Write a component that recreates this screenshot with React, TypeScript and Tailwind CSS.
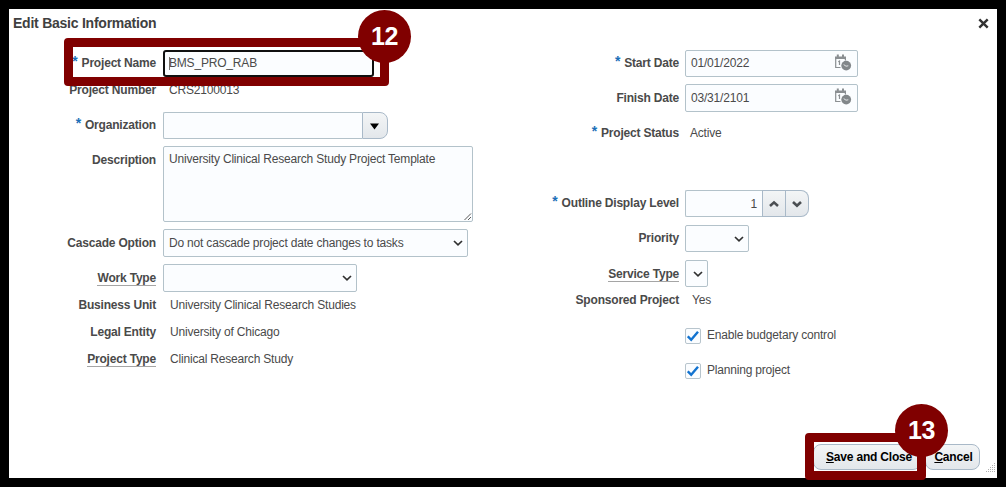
import React from 'react';

interface RowProps {
  label?: string;
  required?: boolean;
  linked?: boolean;
  labelWidth: string;
  className: string;
  children: React.ReactNode;
}

const Row: React.FC<RowProps> = ({ label, required, linked, labelWidth, className, children }) => (
  <div className={`flex items-center ${className}`}>
    <div className={`flex justify-end shrink-0 font-bold text-[#4a4a4a] ${labelWidth}`}>
      {required && <span className="-mt-[4px] mr-1 h-3 text-[14px] leading-[16px] text-[#1c6fb8] font-bold">*</span>}
      {label && <span className={linked ? 'border-b border-[#a5a5a5] leading-[14px] mt-px' : '-mt-px'}>{label}</span>}
    </div>
    {children}
  </div>
);

const LEFT = 'w-[147px] mr-[7px]';
const RIGHT = 'w-[129px] mr-[6px]';
const FIELD = 'flex items-center border border-[#b3c2ca] rounded-[2px] bg-[#fbfdff]';
const BUTTON = 'flex items-center justify-center border border-[#a9b9c8] bg-linear-to-b from-[#f3f5f6] to-[#e3e7eb]';

const Chevron = ({ up = false, bold = false }: { up?: boolean; bold?: boolean }) => (
  <svg width="10" height="8" viewBox="0 0 10 8" fill="none" stroke={bold ? '#4a4e52' : '#303030'} strokeWidth={bold ? 2.6 : 1.7}>
    <path d={up ? 'M1 6L5 2.4L9 6' : 'M1 2L5 5.8L9 2'} />
  </svg>
);

const Select = ({ text, className }: { text?: string; className: string }) => (
  <div className={`${FIELD} justify-between pl-[5px] pr-[4px] ${className}`}>
    <span>{text}</span>
    <Chevron />
  </div>
);

const CalendarIcon = () => (
  <svg width="18" height="18" viewBox="0 0 18 18" fill="none" className="-mt-[2px]">
    <path d="M1.7 3V13.5H6.5" stroke="#8b8f92" strokeWidth="1.2" />
    <path d="M1 2.5H12V5H1Z" fill="#8b8f92" />
    <path d="M3.8 0.6V3.5M9 0.6V3.5" stroke="#8b8f92" strokeWidth="2" />
    <path d="M11.4 4V6.5" stroke="#8b8f92" strokeWidth="1.2" />
    <path d="M4.3 7.8L5.5 7V11" stroke="#8b8f92" strokeWidth="1.2" />
    <circle cx="12.2" cy="11.6" r="4.9" fill="#82878a" />
    <path d="M9.7 10.6L12 12.2L14.3 11.8" stroke="#e4e6e8" strokeWidth="1" />
  </svg>
);

const DateField = ({ value }: { value: string }) => (
  <div className={`${FIELD} w-[173px] h-full justify-between pl-[5px] pr-[5px]`}>
    <span className="-mt-px">{value}</span>
    <CalendarIcon />
  </div>
);

const Check = ({ label }: { label: string }) => (
  <>
    <div className="flex items-center justify-center w-4 h-4 mt-[2px] border border-[#b8c5cd] rounded-[2px] bg-[#fbfdff]">
      <svg width="12" height="12" viewBox="0 0 12 12" fill="none" stroke="#1273d0" strokeWidth="2.4">
        <path d="M0.8 6.3L4.2 9.8L11 1.7" />
      </svg>
    </div>
    <span className="ml-[6px]">{label}</span>
  </>
);

const Step = ({ n, className }: { n: number; className: string }) => (
  <div className={`absolute flex items-center justify-center w-[53px] h-[53px] pb-px rounded-full bg-[#800000] text-white text-[25px] font-bold tracking-[-0.3px] ${className}`}>
    {n}
  </div>
);

export default function App() {
  return (
    <div className="relative w-[1006px] h-[487px] p-[9px] bg-black overflow-hidden font-['Liberation_Sans',Arial,sans-serif] text-[12px] leading-[14px] tracking-[-0.19px] text-[#4a4a4a] whitespace-nowrap">
      <div className="flex flex-col h-[469px] bg-white">
        <header className="flex items-center justify-between h-7 pl-1 pr-2 mb-[13px]">
          <h1 className="text-[14px] tracking-[-0.24px] font-bold text-[#404040]">Edit Basic Information</h1>
          <svg width="11" height="11" viewBox="0 0 11 11" stroke="#333" strokeWidth="2.4">
            <path d="M1.3 1.3L9.7 9.7M9.7 1.3L1.3 9.7" />
          </svg>
        </header>

        <main className="flex">
          <section className="w-[541px]">
            <Row label="Project Name" required labelWidth={LEFT} className="h-[27px]">
              <div className="flex items-center w-[211px] h-[27px] pl-1 pb-px border-2 border-[#101010] rounded-[3px] bg-[#fbfdff]">
                <span className="w-px h-[13px] bg-[#777] -mr-px"></span>
                <span>BMS_PRO_RAB</span>
              </div>
            </Row>
            <Row label="Project Number" labelWidth={LEFT} className="h-[26px] mb-[9px]">
              <span className="ml-[6px]">CRS2100013</span>
            </Row>
            <Row label="Organization" required labelWidth={LEFT} className="h-[27px] mb-[7px]">
              <div className={`${FIELD} w-[199px] h-[27px] rounded-r-none border-r-0`}></div>
              <div className={`${BUTTON} w-[26px] h-[27px] rounded-r-[8px]`}>
                <svg width="9" height="7" viewBox="0 0 9 7" className="mt-[2px] -ml-[2px]">
                  <path d="M0 0.5H9L4.5 6.5Z" fill="#000" />
                </svg>
              </div>
            </Row>
            <Row label="Description" labelWidth={LEFT} className="h-[76px] mb-[7px] items-start [&>div:first-child]:mt-[8px]">
              <div className={`${FIELD} relative items-start w-[310px] h-[76px] pt-[5px] pl-[5px]`}>
                University Clinical Research Study Project Template
                <svg width="8" height="8" viewBox="0 0 8 8" className="absolute right-0 bottom-0" stroke="#5a5a5a">
                  <path d="M0.5 7L7 0.5M4 7L7 4" />
                </svg>
              </div>
            </Row>
            <Row label="Cascade Option" labelWidth={LEFT} className="h-7 mb-[7px]">
              <Select text="Do not cascade project date changes to tasks" className="w-[305px] h-7" />
            </Row>
            <Row label="Work Type" linked labelWidth={LEFT} className="h-7">
              <Select className="w-[194px] h-7" />
            </Row>
            <Row label="Business Unit" labelWidth={LEFT} className="h-[25px] mb-px [&>div:first-child]:mt-px">
              <span className="ml-[7px]">University Clinical Research Studies</span>
            </Row>
            <Row label="Legal Entity" labelWidth={LEFT} className="h-[27px] [&>div:first-child]:mt-px">
              <span className="ml-[7px]">University of Chicago</span>
            </Row>
            <Row label="Project Type" linked labelWidth={LEFT} className="h-[27px]">
              <span className="ml-[7px]">Clinical Research Study</span>
            </Row>
          </section>

          <section>
            <Row label="Start Date" required labelWidth={RIGHT} className="h-[27px] mb-[7px]">
              <DateField value="01/01/2022" />
            </Row>
            <Row label="Finish Date" labelWidth={RIGHT} className="h-7 mb-[7px]">
              <DateField value="03/31/2101" />
            </Row>
            <Row label="Project Status" required labelWidth={RIGHT} className="h-7 mb-[43px]">
              <span className="ml-[5px]">Active</span>
            </Row>
            <Row label="Outline Display Level" required labelWidth={RIGHT} className="h-[27px] mb-[8px]">
              <div className={`${FIELD} justify-end w-[77px] h-[27px] pr-[5px] rounded-r-none border-r-0`}>1</div>
              <div className={`${BUTTON} w-[24px] h-[27px]`}><Chevron up bold /></div>
              <div className={`${BUTTON} w-[23px] h-[27px] border-l-0 rounded-r-[8px]`}><Chevron bold /></div>
            </Row>
            <Row label="Priority" labelWidth={RIGHT} className="h-[27px] mb-[8px]">
              <Select className="w-[64px] h-[27px]" />
            </Row>
            <Row label="Service Type" linked labelWidth={RIGHT} className="h-[27px]">
              <Select className="w-[23px] h-[27px]" />
            </Row>
            <Row label="Sponsored Project" labelWidth={RIGHT} className="h-[25px] mb-[9px] [&>div:first-child]:mt-px">
              <span className="ml-[7px]">Yes</span>
            </Row>
            <Row labelWidth={RIGHT} className="h-7 mb-[7px]">
              <Check label="Enable budgetary control" />
            </Row>
            <Row labelWidth={RIGHT} className="h-7">
              <Check label="Planning project" />
            </Row>
          </section>
        </main>

        <footer className="flex items-end justify-end mt-auto">
          <button className={`${BUTTON} w-[108px] h-[26px] mb-[8px] mr-[4px] pl-[4px] rounded-[8px] font-bold text-black`}>
            <span className="underline">S</span>ave and Close
          </button>
          <button className={`${BUTTON} w-[55px] h-[26px] mb-[8px] mr-[6px] pl-[2px] rounded-[8px] font-bold text-black`}>
            <span className="underline">C</span>ancel
          </button>
          <svg width="10" height="10" viewBox="0 0 10 10" className="mr-px mb-[5px]" stroke="#b0b0b0" strokeDasharray="1 1">
            <path d="M8 0.5H10M6 2.5H10M4 4.5H10M2 6.5H10M0 8.5H10" />
          </svg>
        </footer>
      </div>

      {/* numbered step callouts */}
      <div className="absolute left-[64px] top-[38px] w-[325px] h-[48px] border-[9px] border-[#800000] rounded-[4px]"></div>
      <Step n={12} className="left-[358px] top-[10px]" />
      <div className="absolute left-[805px] top-[433px] w-[121px] h-[47px] border-[9px] border-[#800000] rounded-[4px]"></div>
      <Step n={13} className="left-[895px] top-[404px]" />
    </div>
  );
}
